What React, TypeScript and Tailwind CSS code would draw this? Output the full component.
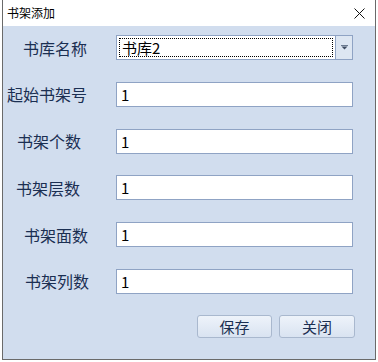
import React from 'react';

const fields = [
  { label: '书库名称', pad: 'pl-[20px]', value: '书库2', combo: true },
  { label: '起始书架号', pad: 'pl-[4px]', value: '1' },
  { label: '书架个数', pad: 'pl-[14px]', value: '1' },
  { label: '书架层数', pad: 'pl-[13px]', value: '1' },
  { label: '书架面数', pad: 'pl-[21px]', value: '1' },
  { label: '书架列数', pad: 'pl-[22px]', value: '1' },
];

const font = { fontFamily: '"Noto Sans CJK SC", "Liberation Sans", sans-serif' };

export default function App() {
  return (
    <div className="w-[378px] h-[362px] bg-white" style={font}>
      <div className="ml-[2px] w-[374px] h-[360px] border-x border-b border-[#6a6a6a] flex flex-col">
        {/* Title bar */}
        <div className="h-[26px] bg-white flex items-center justify-between pl-[4px] pr-[10px] shrink-0">
          <span className="text-[12px] text-black leading-none">书架添加</span>
          <svg className="w-[11px] h-[11px]" viewBox="0 0 11 11" fill="none" stroke="#111" strokeWidth={1}>
            <path d="M0.5 0.5l10 10M10.5 0.5l-10 10" />
          </svg>
        </div>

        {/* Body */}
        <div className="flex-1 bg-[#d1ddee] pt-[9px] flex flex-col">
          <div className="flex flex-col gap-[21.8px]">
            {fields.map((f) => (
              <div key={f.label} className="flex items-center h-[25px]">
                <div className={`w-[113px] shrink-0 ${f.pad}`}>
                  <span className="text-[16px] text-[#1b2f52] leading-none whitespace-nowrap">{f.label}</span>
                </div>
                {f.combo ? (
                  <div className="w-[237px] h-[25px] flex border border-[#8fa3c4] bg-white">
                    <div className="flex-1 p-[2px]">
                      <div className="h-full border border-dotted border-black flex items-center pl-[2px]">
                        <span className="text-[15px] text-black leading-none">{f.value}</span>
                      </div>
                    </div>
                    <div className="w-[17px] border-l border-[#8fa3c4] bg-[#dde6f2] flex items-center justify-center">
                      <svg className="w-[7px] h-[5px]" viewBox="0 0 7 5">
                        <path d="M0 0h7v1H0z" fill="#6b7a90" />
                        <path d="M0.5 1.5h6L3.5 4.5z" fill="#3e4c62" />
                      </svg>
                    </div>
                  </div>
                ) : (
                  <div className="w-[237px] h-[25px] border border-[#8fa3c4] bg-white flex items-center pl-[4px]">
                    <span className="text-[15px] text-black leading-none">{f.value}</span>
                  </div>
                )}
              </div>
            ))}
          </div>

          {/* Buttons */}
          <div className="flex justify-end gap-[7px] mt-[21px] pr-[20px]">
            <button className="w-[75px] h-[23px] rounded-[3px] border border-[#a9b8ce] bg-gradient-to-b from-[#eef3fa] to-[#d9e3f1] text-[15px] text-[#1b2f52] leading-none">
              保存
            </button>
            <button className="w-[76px] h-[23px] rounded-[3px] border border-[#a9b8ce] bg-gradient-to-b from-[#eef3fa] to-[#d9e3f1] text-[15px] text-[#1b2f52] leading-none">
              关闭
            </button>
          </div>
        </div>
      </div>
    </div>
  );
}
